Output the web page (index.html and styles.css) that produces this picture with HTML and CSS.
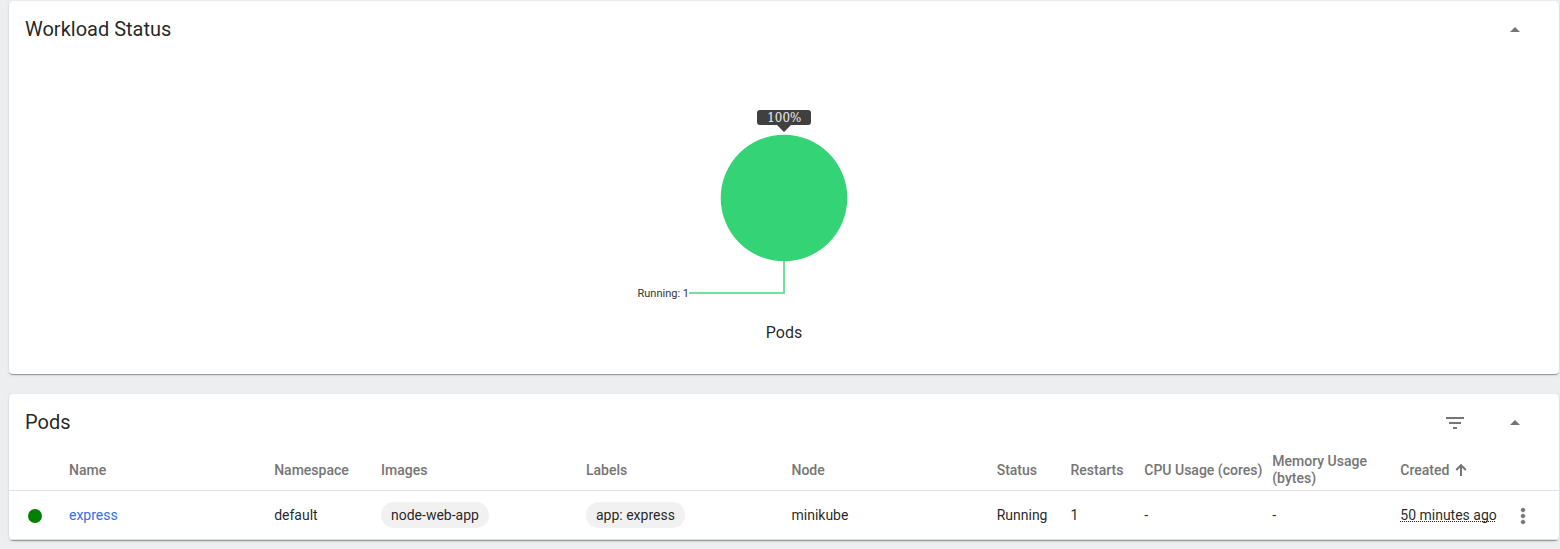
FILE: index.html
```html
<!DOCTYPE html>
<html lang="en">
<head>
<meta charset="utf-8">
<title>Workloads</title>
<link rel="stylesheet" href="styles.css">
</head>
<body>
<main class="content">
  <section class="card status-card">
    <header class="card-header">
      <h2 class="card-title">Workload Status</h2>
      <svg class="icon" viewBox="0 0 24 24"><path d="M7 14l5-5 5 5z"/></svg>
    </header>
    <figure class="chart">
      <svg class="pie" width="400" height="200" viewBox="0 0 400 200">
        <circle class="slice" cx="200" cy="98" r="63.300"/>
        <path class="callout-line" d="M200 161V193H105"/>
        <text class="slice-label" x="105" y="197" text-anchor="end">Running: 1</text>
        <path class="tip" d="M176 10h48a3 3 0 0 1 3 3v9a3 3 0 0 1-3 3h-17l-7 7-7-7h-17a3 3 0 0 1-3-3v-9a3 3 0 0 1 3-3z"/>
        <text class="tip-label" x="200.300" y="22" text-anchor="middle">100%</text>
      </svg>
      <figcaption class="chart-title">Pods</figcaption>
    </figure>
  </section>

  <section class="card pods-card">
    <header class="card-header">
      <h2 class="card-title">Pods</h2>
      <svg class="icon filter" viewBox="0 0 24 24"><path d="M10 18h4v-2h-4v2zM3 6v2h18V6H3zm3 7h12v-2H6v2z"/></svg>
      <svg class="icon" viewBox="0 0 24 24"><path d="M7 14l5-5 5 5z"/></svg>
    </header>
    <div class="row head">
      <span></span>
      <span>Name</span>
      <span>Namespace</span>
      <span>Images</span>
      <span>Labels</span>
      <span>Node</span>
      <span>Status</span>
      <span>Restarts</span>
      <span>CPU Usage (cores)</span>
      <span>Memory Usage (bytes)</span>
      <span class="sorted">Created <svg class="sort-arrow" width="12" height="12" viewBox="0 0 12 12"><path d="M6 12V1.500M1.200 6L6 1.200 10.800 6"/></svg></span>
      <span></span>
    </div>
    <div class="row">
      <span class="dot"></span>
      <a class="link">express</a>
      <span>default</span>
      <span><span class="chip">node-web-app</span></span>
      <span><span class="chip">app: express</span></span>
      <span>minikube</span>
      <span>Running</span>
      <span>1</span>
      <span>-</span>
      <span>-</span>
      <span><span class="age">50 minutes ago</span></span>
      <svg class="icon menu" viewBox="0 0 24 24"><path d="M12 8c1.100 0 2-.9 2-2s-.9-2-2-2-2 .9-2 2 .9 2 2 2zm0 2c-1.100 0-2 .9-2 2s.9 2 2 2 2-.9 2-2-.9-2-2-2zm0 6c-1.100 0-2 .9-2 2s.9 2 2 2 2-.9 2-2-.9-2-2-2z"/></svg>
    </div>
  </section>
</main>
</body>
</html>
```

FILE: styles.css
```css
* { box-sizing: border-box; }

body {
  margin: 0;
  height: 549px;
  overflow: hidden;
  background: #edeef0;
  color: rgba(0, 0, 0, .87);
  font: 14px/17px Roboto, sans-serif;
}

.content {
  display: flex;
  flex-direction: column;
  gap: 20px;
  padding: 1px 1px 0 9px;
}

.card {
  background: #fff;
  border-radius: 4px;
  box-shadow: 0 2px 1px -1px rgba(0, 0, 0, .2), 0 1px 1px rgba(0, 0, 0, .14), 0 1px 3px rgba(0, 0, 0, .12);
}

.status-card { height: 373px; }
.pods-card { height: 146px; }

.card-header {
  display: flex;
  align-items: center;
  height: 56px;
  padding: 0 32px 0 16px;
}

.card-title {
  flex: 1;
  margin: 0;
  font-size: 20px;
  font-weight: 400;
  line-height: 24px;
}

.icon {
  width: 24px;
  height: 24px;
  margin-top: 2px;
  fill: #757575;
}

.filter { margin-right: 36px; }

.chart {
  display: flex;
  flex-direction: column;
  align-items: center;
  margin: 43px 0 0;
}

.pie { display: block; }
.slice { fill: #34d375; }
.callout-line { fill: none; stroke: #35d377; stroke-width: 2; stroke-opacity: .7; }
.slice-label { font-size: 11px; fill: #333; }
.tip { fill: #404040; }
.tip-label { font-family: "DejaVu Serif Condensed", "DejaVu Serif", serif; font-stretch: condensed; font-size: 13.200px; fill: #eee; }

.chart-title {
  margin-top: 23px;
  font-size: 16px;
  line-height: 20px;
}

.row {
  display: grid;
  grid-template-columns: 44px 205.200px 106.800px 205px 205.500px 205.200px 73.800px 73.800px 128px 128px 110.700px 24px;
  align-items: center;
  height: 49px;
  padding-left: 16px;
  border-bottom: 1px solid #e0e0e0;
}

.head {
  height: 41px;
  color: #757575;
  font-weight: 500;
}

.dot {
  width: 14px;
  height: 14px;
  margin: 1px 0 0 3px;
  border-radius: 50%;
  background: #008000;
}

.link { color: #326de6; }

.chip {
  display: inline-block;
  padding: 0 10px;
  border-radius: 13px;
  background: #f1f1f1;
  line-height: 26px;
}

.sorted {
  display: flex;
  align-items: center;
  gap: 5.500px;
}

.sort-arrow { fill: none; stroke: #757575; stroke-width: 2; }

.menu path { stroke: #757575; stroke-width: .4; }

.age {
  text-decoration: underline dotted 1px;
  text-underline-offset: 1px;
  text-decoration-skip-ink: none;
}
```
